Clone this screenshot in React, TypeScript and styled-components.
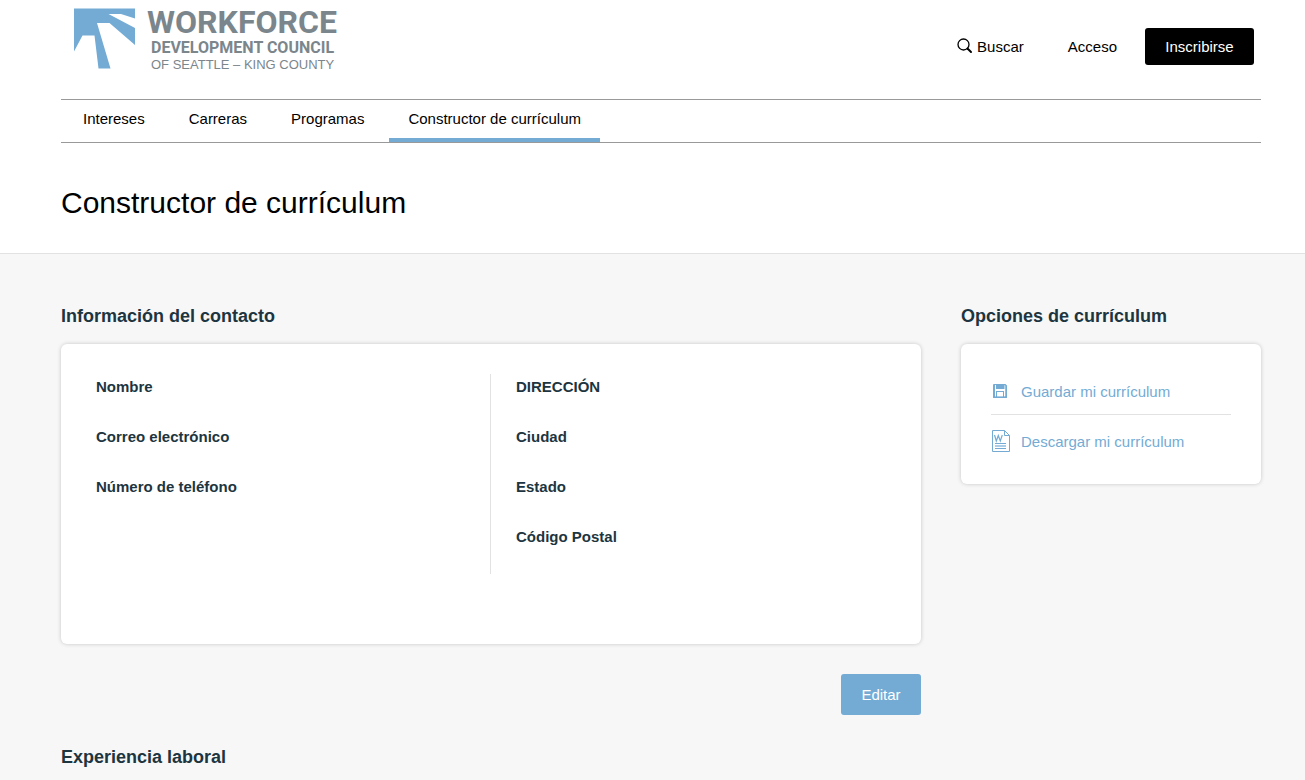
import React from "react";
import styled, { createGlobalStyle, css } from "styled-components";

const GlobalStyle = createGlobalStyle`
  *, *::before, *::after { box-sizing: border-box; }
  body {
    margin: 0;
    background: #f7f7f7;
    color: #1d3540;
    font-family: "Liberation Sans", Arial, Helvetica, sans-serif;
    font-size: 15px;
    line-height: 20px;
  }
`;

const Page = styled.div`
  display: flex;
  flex-direction: column;
  min-height: 100vh;
`;

const TopArea = styled.div`
  padding: 0 44px 0 61px;
  background: #fff;
  border-bottom: 1px solid #e2e2e2;
  color: #000;
`;

const Header = styled.header`
  display: flex;
  justify-content: space-between;
  align-items: flex-start;
  height: 99px;
`;

const Logo = styled.a`
  display: flex;
  gap: 11px;
  padding: 8px 0 0 13px;
  color: #7b868c;
  text-decoration: none;
`;

const LogoText = styled.span`
  display: flex;
  flex-direction: column;
  white-space: nowrap;
`;

const LogoName = styled.span`
  font: bold 32px/28px Roboto, "Liberation Sans", sans-serif;
`;

const LogoCouncil = styled.span`
  padding: 3px 0 0 4px;
  font: bold 16px/18px Roboto, "Liberation Sans", sans-serif;
`;

const LogoPlace = styled.span`
  padding-left: 4px;
  font-size: 13px;
  line-height: 16px;
`;

const Account = styled.div`
  display: flex;
  align-items: center;
  padding: 28px 7px 0 0;
`;

const AccountLink = styled.a`
  display: flex;
  align-items: center;
  gap: 4px;
  margin-right: 44px;
  color: #000;
  text-decoration: none;

  & + & { margin-right: 28px; }
`;

const Button = styled.button<{ $tone: "dark" | "blue" }>`
  padding: 0 20px;
  border: 0;
  border-radius: 3px;
  color: #fff;
  font: inherit;
  cursor: pointer;
  ${({ $tone }) =>
    $tone === "dark"
      ? css`min-width: 109px; height: 37px; background: #000;`
      : css`min-width: 80px; height: 41px; background: #73abd4;`}
`;

const Nav = styled.nav`
  display: flex;
  gap: 6px;
  height: 44px;
  padding-left: 3px;
  border-top: 1px solid #999;
  border-bottom: 1px solid #999;
`;

const NavLink = styled.a<{ $active?: boolean }>`
  padding: 9px 19px 0;
  border-bottom: 4px solid ${({ $active }) => ($active ? "#73abd4" : "transparent")};
  color: #000;
  text-decoration: none;
`;

const Title = styled.h1`
  margin: 0;
  padding: 40px 0 30px;
  font-size: 30px;
  font-weight: 400;
  line-height: 40px;
`;

const Main = styled.main`
  display: flex;
  flex: 1;
  align-items: flex-start;
  gap: 40px;
  padding: 50px 44px 0 61px;
`;

const Content = styled.div`
  flex: 1;
  min-width: 0;
`;

const Sidebar = styled.aside`
  flex: 0 0 300px;
`;

const Heading = styled.h2`
  margin: 0;
  padding-bottom: 16px;
  font-size: 18px;
  line-height: 24px;
`;

const Card = styled.div`
  padding: 30px;
  border-radius: 6px;
  background: #fff;
  box-shadow: 0 0 4px rgba(0, 0, 0, 0.2);
`;

const ContactCard = styled(Card)`
  display: grid;
  grid-template-columns: 1fr 1fr;
  min-height: 300px;
  padding-bottom: 70px;
`;

const FieldList = styled.dl<{ $divided?: boolean }>`
  margin: 0;
  padding-left: ${({ $divided }) => ($divided ? "5px" : "25px")};
  border-right: ${({ $divided }) => ($divided ? "1px solid #e2e2e2" : "0")};
`;

const Field = styled.dt`
  height: 50px;
  padding-top: 3px;
  font-weight: 700;
`;

const Actions = styled.div`
  display: flex;
  justify-content: flex-end;
  padding: 30px 0;
`;

const Options = styled.ul`
  margin: 0;
  padding: 0;
  list-style: none;
`;

const Option = styled.li`
  padding: 5px 0 11px;

  & + & {
    padding: 14px 0 1px;
    border-top: 1px solid #e2e2e2;
  }
`;

const OptionLink = styled.a`
  display: flex;
  align-items: center;
  gap: 10px;
  height: 24px;
  color: #73abd4;
  text-decoration: none;
`;

const OptionText = styled.span`
  padding-top: 2px;
`;

const IconSlot = styled.span`
  display: flex;
  justify-content: center;
  width: 20px;
`;

const LogoMark = () => (
  <svg width="62" height="61" viewBox="0 0 62 61" fill="#73abd4" aria-hidden="true">
    <path d="M0 .5H61V10.500L47 6H34.500L61 20V37L35.500 15H23L36.500 60.500H24.500L20.500 27.500H8.500L0 43.500Z" />
  </svg>
);

const SearchIcon = () => (
  <svg width="16" height="18" viewBox="0 0 16 18" fill="none" stroke="#000" aria-hidden="true">
    <circle cx="6.500" cy="6.500" r="5.500" strokeWidth="1.300" />
    <path d="M10.500 10.500L14 14" strokeWidth="2" strokeLinecap="round" />
  </svg>
);

const SaveIcon = () => (
  <svg width="16" height="14" viewBox="0 0 16 14" aria-hidden="true">
    <path
      d="M1 0H12.500L14 1.500V13Q14 14 13 14H1Q0 14 0 13V1Q0 0 1 0ZM2 1V12.500H3V7H11V12.500H12.500V2L11.500 1V5H3V1ZM4 8V12.500H10V8Z"
      fill="#73abd4"
      fillRule="evenodd"
    />
    <path d="M4 1H10V4H4Z" fill="#73abd4" />
    <path d="M.5 1V13M13 2V13M0 13.300H14" stroke="#73abd4" />
  </svg>
);

const WordIcon = () => (
  <svg width="18" height="22" viewBox="0 0 18 22" fill="none" stroke="#73abd4" aria-hidden="true">
    <path d="M.5 .5H12.500L17.500 5.500V21.500H.5ZM12.500 .5V5.500H17.500" />
    <path d="M2.500 5L4.300 11L6.300 5.500L8.300 11L10.300 5" strokeWidth="1.200" />
    <path d="M3 13.500H14M3 18.500H14" />
    <path d="M3 16H14" strokeWidth="2" strokeOpacity=".6" />
  </svg>
);

const navItems = ["Intereses", "Carreras", "Programas", "Constructor de currículum"];
const personFields = ["Nombre", "Correo electrónico", "Número de teléfono"];
const addressFields = ["DIRECCIÓN", "Ciudad", "Estado", "Código Postal"];

export default function App() {
  return (
    <Page>
      <GlobalStyle />
      <TopArea>
        <Header>
          <Logo href="#">
            <LogoMark />
            <LogoText>
              <LogoName>WORKFORCE</LogoName>
              <LogoCouncil>DEVELOPMENT COUNCIL</LogoCouncil>
              <LogoPlace>OF SEATTLE – KING COUNTY</LogoPlace>
            </LogoText>
          </Logo>
          <Account>
            <AccountLink href="#"><SearchIcon />Buscar</AccountLink>
            <AccountLink href="#">Acceso</AccountLink>
            <Button type="button" $tone="dark">Inscribirse</Button>
          </Account>
        </Header>
        <Nav>
          {navItems.map((item, i) => (
            <NavLink key={item} href="#" $active={i === 3}>{item}</NavLink>
          ))}
        </Nav>
        <Title>Constructor de currículum</Title>
      </TopArea>
      <Main>
        <Content>
          <Heading>Información del contacto</Heading>
          <ContactCard>
            <FieldList $divided>
              {personFields.map((name) => <Field key={name}>{name}</Field>)}
            </FieldList>
            <FieldList>
              {addressFields.map((name) => <Field key={name}>{name}</Field>)}
            </FieldList>
          </ContactCard>
          <Actions>
            <Button type="button" $tone="blue">Editar</Button>
          </Actions>
          <Heading>Experiencia laboral</Heading>
        </Content>
        <Sidebar>
          <Heading>Opciones de currículum</Heading>
          <Card>
            <Options>
              <Option>
                <OptionLink href="#"><IconSlot><SaveIcon /></IconSlot><OptionText>Guardar mi currículum</OptionText></OptionLink>
              </Option>
              <Option>
                <OptionLink href="#"><IconSlot><WordIcon /></IconSlot><OptionText>Descargar mi currículum</OptionText></OptionLink>
              </Option>
            </Options>
          </Card>
        </Sidebar>
      </Main>
    </Page>
  );
}
